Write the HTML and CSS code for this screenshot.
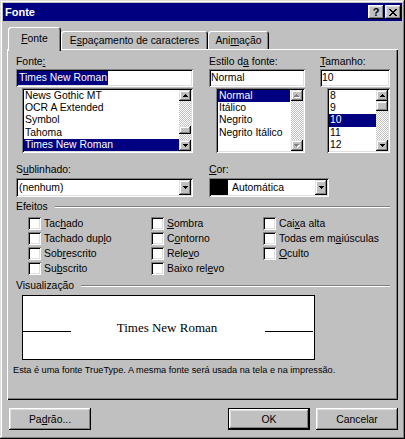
FILE: index.html
```html
<!DOCTYPE html>
<html lang="pt">
<head>
<meta charset="utf-8">
<title>Fonte</title>
<link rel="stylesheet" href="styles.css">
</head>
<body>
<div class="window">
  <div class="titlebar">
    <span class="title">Fonte</span>
    <div class="tbtns">
      <span class="tbtn help">?</span>
      <span class="tbtn close"><svg width="8" height="7" viewBox="0 0 8 7" shape-rendering="crispEdges"><path d="M0 0h2v1h1v1h2v-1h1v-1h2v1h-1v1h-1v1h-1v1h1v1h1v1h1v1h-2v-1h-1v-1h-2v1h-1v1h-2v-1h1v-1h1v-1h1v-1h-1v-1h-1v-1h-1z" fill="#000"/></svg></span>
    </div>
  </div>

  <div class="tabs">
    <div class="tab active t1"><span><u>F</u>onte</span></div>
    <div class="tab t2"><span>E<u>s</u>paçamento de caracteres</span></div>
    <div class="tab t3"><span>Ani<u>m</u>ação</span></div>
  </div>

  <div class="page">
    <div class="fontrow">
      <div class="col c1">
        <div class="lbl">Fonte<u>:</u></div>
        <div class="field"><span class="hl">Times New Roman</span></div>
        <div class="listbox">
          <div class="items">
            <div class="item">News Gothic MT</div>
            <div class="item">OCR A Extended</div>
            <div class="item">Symbol</div>
            <div class="item">Tahoma</div>
            <div class="item sel">Times New Roman</div>
          </div>
          <div class="vscroll">
            <div class="sbtn"><svg width="5" height="3" viewBox="0 0 5 3" shape-rendering="crispEdges"><path d="M2 0h1v1h1v1h1v1h-5v-1h1v-1h1z" fill="#000"/></svg></div>
            <div class="track"><div class="thumb thumb-font"></div></div>
            <div class="sbtn"><svg width="5" height="3" viewBox="0 0 5 3" shape-rendering="crispEdges"><path d="M0 0h5v1h-1v1h-1v1h-1v-1h-1v-1h-1z" fill="#000"/></svg></div>
          </div>
        </div>
      </div>
      <div class="col c2">
        <div class="lbl">Estilo d<u>a</u> fonte:</div>
        <div class="field">Normal</div>
        <div class="listbox">
          <div class="items">
            <div class="item sel sel-short">Normal</div>
            <div class="item">Itálico</div>
            <div class="item">Negrito</div>
            <div class="item">Negrito Itálico</div>
          </div>
          <div class="vscroll">
            <div class="sbtn"><svg width="6" height="4" viewBox="0 0 6 4" shape-rendering="crispEdges"><path d="M3 1h1v1h1v1h1v1h-5v-1h1v-1h1z" fill="#fff"/><path d="M2 0h1v1h1v1h1v1h-5v-1h1v-1h1z" fill="#808080"/></svg></div>
            <div class="track"></div>
            <div class="sbtn"><svg width="6" height="4" viewBox="0 0 6 4" shape-rendering="crispEdges"><path d="M1 1h5v1h-1v1h-1v1h-1v-1h-1v-1h-1z" fill="#fff"/><path d="M0 0h5v1h-1v1h-1v1h-1v-1h-1v-1h-1z" fill="#808080"/></svg></div>
          </div>
        </div>
      </div>
      <div class="col c3">
        <div class="lbl"><u>T</u>amanho:</div>
        <div class="field">10</div>
        <div class="listbox">
          <div class="items">
            <div class="item">8</div>
            <div class="item">9</div>
            <div class="item sel">10</div>
            <div class="item">11</div>
            <div class="item">12</div>
          </div>
          <div class="vscroll">
            <div class="sbtn"><svg width="5" height="3" viewBox="0 0 5 3" shape-rendering="crispEdges"><path d="M2 0h1v1h1v1h1v1h-5v-1h1v-1h1z" fill="#000"/></svg></div>
            <div class="track"><div class="thumb thumb-size"></div></div>
            <div class="sbtn"><svg width="5" height="3" viewBox="0 0 5 3" shape-rendering="crispEdges"><path d="M0 0h5v1h-1v1h-1v1h-1v-1h-1v-1h-1z" fill="#000"/></svg></div>
          </div>
        </div>
      </div>
    </div>

    <div class="selrow">
      <div class="col s1">
        <div class="lbl">S<u>u</u>blinhado:</div>
        <div class="combo">
          <span class="ctext">(nenhum)</span>
          <span class="dbtn"><svg width="5" height="3" viewBox="0 0 5 3" shape-rendering="crispEdges"><path d="M0 0h5v1h-1v1h-1v1h-1v-1h-1v-1h-1z" fill="#000"/></svg></span>
        </div>
      </div>
      <div class="col s2">
        <div class="lbl"><u>C</u>or:</div>
        <div class="combo">
          <span class="swatch"></span>
          <span class="ctext">Automática</span>
          <span class="dbtn"><svg width="5" height="3" viewBox="0 0 5 3" shape-rendering="crispEdges"><path d="M0 0h5v1h-1v1h-1v1h-1v-1h-1v-1h-1z" fill="#000"/></svg></span>
        </div>
      </div>
    </div>

    <div class="group">
      <span class="gtitle">Efeitos</span>
      <span class="gline"></span>
    </div>
    <div class="effects">
      <div class="cb"><span class="box"></span><span>Tac<u>h</u>ado</span></div>
      <div class="cb"><span class="box"></span><span>Tachado dup<u>l</u>o</span></div>
      <div class="cb"><span class="box"></span><span>Sob<u>r</u>escrito</span></div>
      <div class="cb"><span class="box"></span><span>Su<u>b</u>scrito</span></div>
      <div class="cb"><span class="box"></span><span><u>S</u>ombra</span></div>
      <div class="cb"><span class="box"></span><span>C<u>o</u>ntorno</span></div>
      <div class="cb"><span class="box"></span><span>Rele<u>v</u>o</span></div>
      <div class="cb"><span class="box"></span><span>Baixo rel<u>e</u>vo</span></div>
      <div class="cb"><span class="box"></span><span>Cai<u>x</u>a alta</span></div>
      <div class="cb"><span class="box"></span><span>Todas em m<u>a</u>iúsculas</span></div>
      <div class="cb"><span class="box"></span><span><u>O</u>culto</span></div>
    </div>

    <div class="group">
      <span class="gtitle">Visualização</span>
      <span class="gline"></span>
    </div>
    <div class="preview">
      <div class="pv-inner">
        <span class="pv-line"></span>
        <span class="pv-text">Times New Roman</span>
        <span class="pv-line"></span>
      </div>
    </div>
    <div class="note">Esta é uma fonte TrueType. A mesma fonte será usada na tela e na impressão.</div>
  </div>

  <div class="buttons">
    <div class="btn">Pa<u>d</u>rão...</div>
    <div class="right">
      <div class="btn default">OK</div>
      <div class="btn">Cancelar</div>
    </div>
  </div>
</div>
</body>
</html>
```

FILE: styles.css
```css
* { box-sizing: border-box; }
html, body { margin: 0; padding: 0; }
body {
  width: 405px;
  height: 439px;
  overflow: hidden;
  background: #c0c0c0;
  font-family: "Liberation Sans", Arial, sans-serif;
  font-size: 10.4px;
  color: #000;
}
u { text-decoration: underline; text-underline-offset: 1px; }

.window {
  width: 405px;
  height: 439px;
  padding: 3px;
  background: #c0c0c0;
  display: flex;
  flex-direction: column;
  box-shadow: inset -1px -1px #000, inset 1px 1px #dfdfdf, inset -2px -2px #808080, inset 2px 2px #fff;
}

/* title bar */
.titlebar {
  height: 18px;
  flex: none;
  background: #000080;
  display: flex;
  align-items: center;
  padding: 0 1px 0 2px;
}
.title { color: #fff; font-weight: bold; font-size: 11px; }
.tbtns { margin-left: auto; display: flex; gap: 1px; }
.tbtn {
  width: 16px;
  height: 14px;
  background: #c0c0c0;
  display: flex;
  align-items: center;
  justify-content: center;
  font-weight: bold;
  font-size: 11px;
  line-height: 1;
  box-shadow: inset -1px -1px #000, inset 1px 1px #fff, inset -2px -2px #808080, inset 2px 2px #dfdfdf;
}
.tbtn.help { padding-top: 1px; }

/* tabs */
.tabs {
  flex: none;
  height: 22px;
  margin-top: 6px;
  padding-left: 5px;
  display: flex;
  align-items: flex-end;
}
.tab {
  height: 18px;
  display: flex;
  align-items: center;
  justify-content: center;
  background: #c0c0c0;
  border-radius: 3px 3px 0 0;
  box-shadow: inset 1px 1px #fff, inset -1px 0 #000, inset -2px 0 #808080;
  padding-top: 1px;
}
.tab.active {
  height: 24px;
  margin-bottom: -2px;
  position: relative;
  z-index: 2;
  padding-bottom: 2px;
}
.t1 { width: 53px; }
.t2 { width: 147px; }
.t3 { width: 61px; }

/* page */
.page {
  flex: none;
  height: 351px;
  margin: 0 4px;
  padding: 6px 8px 0 6px;
  box-shadow: inset 1px 1px #fff, inset -1px -1px #000, inset -2px -2px #808080;
  display: flex;
  flex-direction: column;
}

.lbl { height: 14px; line-height: 13px; white-space: nowrap; }

.fontrow {
  display: grid;
  grid-template-columns: 177px 96px 69px;
  column-gap: 16px;
  padding-left: 3px;
}
.c3 { margin-left: -1px; }
.field {
  height: 18px;
  background: #fff;
  padding: 2px 2px 0 2px;
  line-height: 14px;
  white-space: nowrap;
  box-shadow: inset 1px 1px #808080, inset -1px -1px #fff, inset 2px 2px #000, inset -2px -2px #dfdfdf;
}
.hl { background: #000080; color: #fff; display: inline-block; height: 14px; padding: 0 1px; }

.listbox {
  margin-top: 1px;
  margin-left: 7px;
  height: 65px;
  background: #fff;
  padding: 2px;
  display: flex;
  box-shadow: inset 1px 1px #808080, inset -1px -1px #fff, inset 2px 2px #000, inset -2px -2px #dfdfdf;
}
.c1 .listbox { margin-left: 6px; }
.items { flex: 1; overflow: hidden; min-width: 0; }
.item {
  height: 12.2px;
  line-height: 12.2px;
  padding-left: 1px;
  white-space: nowrap;
}
.item.sel { background: #000080; color: #fff; }
.item.sel-short { margin-right: 1px; }

.vscroll {
  width: 12px;
  flex: none;
  display: flex;
  flex-direction: column;
}
.sbtn {
  height: 11px;
  flex: none;
  background: #c0c0c0;
  display: flex;
  align-items: center;
  justify-content: center;
  box-shadow: inset -1px -1px #000, inset 1px 1px #dfdfdf, inset -2px -2px #808080, inset 2px 2px #fff;
}
.track {
  flex: 1;
  background: repeating-conic-gradient(#c0c0c0 0 25%, #fff 0 50%) 0 0 / 2px 2px;
}
.thumb {
  height: 8px;
  background: #c0c0c0;
  box-shadow: inset -1px -1px #000, inset 1px 1px #dfdfdf, inset -2px -2px #808080, inset 2px 2px #fff;
}
.thumb-font { margin-top: 25px; }
.thumb-size { height: 10px; }

/* underline / colour row */
.selrow {
  margin-top: 10px;
  padding-left: 3px;
  display: flex;
  gap: 16px;
}
.selrow .lbl { height: 15px; line-height: 14px; }
.s1 { width: 177px; }
.s2 { width: 120px; }
.combo {
  height: 19px;
  background: #fff;
  padding: 2px;
  display: flex;
  align-items: center;
  box-shadow: inset 1px 1px #808080, inset -1px -1px #fff, inset 2px 2px #000, inset -2px -2px #dfdfdf;
}
.ctext { flex: 1; padding-left: 1px; white-space: nowrap; }
.swatch { width: 17px; height: 15px; background: #000; flex: none; margin-right: 3px; }
.dbtn {
  width: 12px;
  height: 15px;
  flex: none;
  background: #c0c0c0;
  display: flex;
  align-items: center;
  justify-content: center;
  box-shadow: inset -1px -1px #000, inset 1px 1px #dfdfdf, inset -2px -2px #808080, inset 2px 2px #fff;
}

/* group headers */
.group {
  height: 13px;
  margin-top: 3px;
  padding-left: 3px;
  display: flex;
  align-items: center;
}
.gtitle { white-space: nowrap; }
.gline {
  flex: 1;
  height: 2px;
  margin-left: 7px;
  border-top: 1px solid #808080;
  border-bottom: 1px solid #fff;
}

/* effects checkboxes */
.effects {
  margin-top: 3px;
  padding-left: 15px;
  display: grid;
  grid-template-columns: 123px 112px auto;
  grid-template-rows: repeat(4, 15px);
  grid-auto-flow: column;
}
.cb { display: flex; align-items: center; white-space: nowrap; }
.box {
  width: 13px;
  height: 13px;
  flex: none;
  margin-right: 3px;
  background: #fff;
  box-shadow: inset 1px 1px #808080, inset -1px -1px #fff, inset 2px 2px #000, inset -2px -2px #dfdfdf;
}

/* preview */
.preview {
  margin: 3px 0 0 9px;
  width: 293px;
  height: 65px;
  background: #fff;
  border: 1px solid #000;
  display: flex;
  align-items: center;
  padding-right: 1px;
}
.pv-inner { width: 100%; display: flex; align-items: baseline; }
.pv-line { width: 48px; height: 1px; border-bottom: 1px solid #000; flex: none; }
.pv-text {
  flex: 1;
  text-align: center;
  font-family: "Liberation Serif", "Times New Roman", serif;
  font-size: 13px;
  padding-right: 2px;
}
.note {
  margin-top: 4px;
  height: 13px;
  line-height: 13px;
  font-size: 9.2px;
  white-space: nowrap;
}

/* bottom buttons */
.buttons {
  flex: none;
  margin: 8px 4px 0 6px;
  display: flex;
  justify-content: space-between;
}
.right { display: flex; gap: 6px; }
.btn {
  width: 82px;
  height: 22px;
  background: #c0c0c0;
  display: flex;
  align-items: center;
  justify-content: center;
  box-shadow: inset -1px -1px #000, inset 1px 1px #fff, inset -2px -2px #808080, inset 2px 2px #dfdfdf;
}
.btn.default {
  box-shadow: inset 0 0 0 1px #000, inset -2px -2px #000, inset 2px 2px #fff, inset -3px -3px #808080, inset 3px 3px #dfdfdf;
}
```
